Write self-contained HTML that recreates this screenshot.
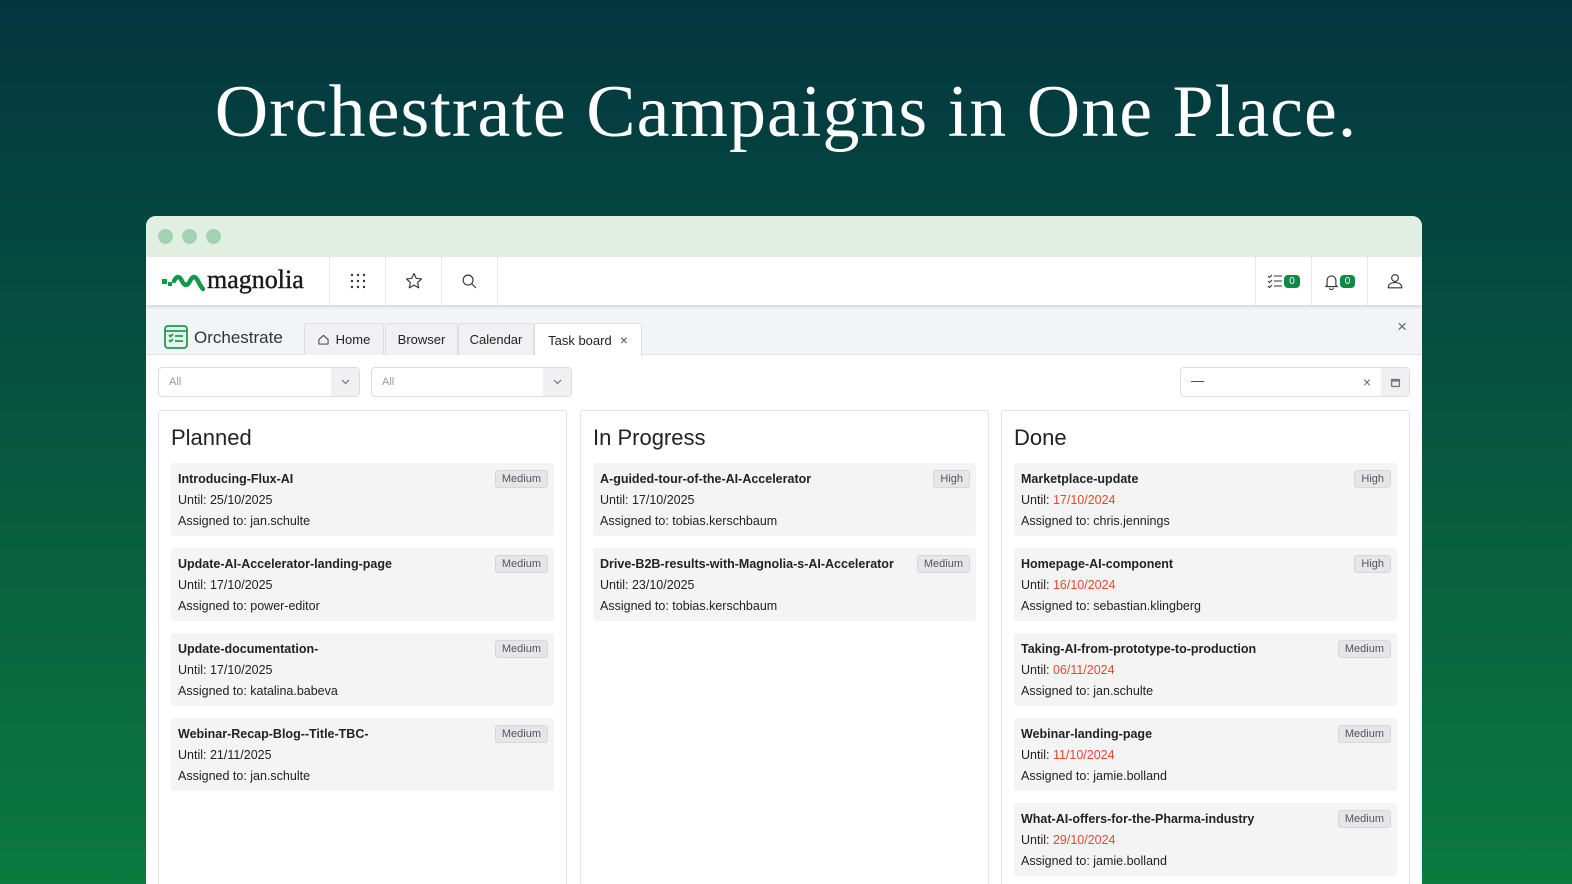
<!DOCTYPE html>
<html><head><meta charset="utf-8"><style>
*{box-sizing:border-box;margin:0;padding:0}
html,body{width:1572px;height:884px;overflow:hidden}
body{background:linear-gradient(180deg,#033540 0%,#06503f 40%,#0b7a3f 100%);font-family:"Liberation Sans",Arial,sans-serif;position:relative}
h1{position:absolute;top:70px;left:0;width:1572px;text-align:center;color:#fff;font-family:"Liberation Serif",serif;font-weight:400;font-size:74px;letter-spacing:1px}
.win{position:absolute;left:146px;top:216px;width:1276px;height:668px;background:#fff;border-radius:10px 10px 0 0;overflow:hidden}
.tb{height:41px;background:#e0efe2;position:relative}
.dot{position:absolute;top:13px;width:15px;height:15px;border-radius:50%;background:#a3d1b2}
.hdr{height:48px;background:#fff;position:relative;box-shadow:0 2px 3px rgba(0,0,0,.12);z-index:2}
.hb{position:absolute;top:0;height:48px;border-left:1px solid #e8e8e8;display:flex;align-items:center;justify-content:center}
.sub{height:50px;background:#f3f4f6;position:relative;border-bottom:1px solid #e2e2e2}
.tab{position:absolute;top:18px;height:32px;border:1px solid #ddd;border-bottom:none;border-radius:3px 3px 0 0;background:#f1f1f3;font-size:13px;color:#222;display:flex;align-items:center;justify-content:center}
.sel{position:absolute;top:151px;height:30px;border:1px solid #dcdcdc;border-radius:4px;background:#fff;font-size:11px;color:#999;padding:8px 10px}
.sel .ar{position:absolute;right:0;top:0;width:28px;height:28px;background:#f0f0f2;display:flex;align-items:center;justify-content:center}
.col{position:absolute;top:194px;width:409px;height:500px;border:1px solid #e3e3e3;border-radius:3px;background:#fff}
.col h2{font-weight:400;font-size:22px;color:#222;position:absolute;left:12px;top:14px}
.card{position:absolute;left:12px;width:383px;height:73px;background:#f4f4f4;border-radius:3px;padding:6px 7px;font-size:12.5px;color:#222;line-height:21px}
.card b{font-weight:700}
.bd{position:absolute;right:6px;top:7px;height:18px;background:#e6e6ea;border:1px solid #d6d6db;border-radius:3px;font-size:11px;color:#555;line-height:16px;padding:0 6px}
.r{color:#e8462f}
.g{background:#0f8a45;color:#fff;font-size:10px;border-radius:4px;padding:1px 5px;margin-left:1px}
</style></head><body>
<h1>Orchestrate Campaigns in One Place.</h1>
<div class="win">
<div class="tb"><div class="dot" style="left:12px"></div><div class="dot" style="left:36px"></div><div class="dot" style="left:60px"></div></div>
<div class="hdr">
<div style="position:absolute;left:15px;top:12px;display:flex;align-items:center">
<svg width="44" height="22" viewBox="0 0 44 22"><rect x="1" y="8" width="5" height="5" fill="#0f9a4a"/><rect x="7" y="11" width="4" height="4" fill="#0f9a4a"/><path d="M13 10 Q17 2 21 10 T29 10 T37 10 Q40 16 42 18" stroke="#0f9a4a" stroke-width="4.5" fill="none" stroke-linecap="round"/></svg>
<span style="font-family:'Liberation Serif',serif;font-size:26px;color:#1a1a1a;margin-left:2px;margin-top:-4px;-webkit-text-stroke:0.4px #1a1a1a">magnolia</span></div>
<div class="hb" style="left:183px;width:56px"><svg width="16" height="16"><g fill="#333"><circle cx="2" cy="2" r="1.2"/><circle cx="8" cy="2" r="1.2"/><circle cx="14" cy="2" r="1.2"/><circle cx="2" cy="8" r="1.2"/><circle cx="8" cy="8" r="1.2"/><circle cx="14" cy="8" r="1.2"/><circle cx="2" cy="14" r="1.2"/><circle cx="8" cy="14" r="1.2"/><circle cx="14" cy="14" r="1.2"/></g></svg></div>
<div class="hb" style="left:239px;width:56px"><svg width="18" height="18" viewBox="0 0 24 24"><path d="M12 2l3 6.5 7 .8-5.2 4.8 1.5 7L12 17.5 5.7 21.1l1.5-7L2 9.3l7-.8z" fill="none" stroke="#333" stroke-width="1.5" stroke-linejoin="round"/></svg></div>
<div class="hb" style="left:295px;width:57px;border-right:1px solid #e8e8e8"><svg width="17" height="17" viewBox="0 0 24 24"><circle cx="10" cy="10" r="7" fill="none" stroke="#333" stroke-width="1.6"/><path d="M15 15l6 6" stroke="#333" stroke-width="1.6"/></svg></div>
<div class="hb" style="left:1109px;width:56px"><svg width="16" height="14" viewBox="0 0 16 14"><path d="M1 2l1.5 1.5L5 1M1 7l1.5 1.5L5 6M1 12l1.5 1.5L5 11M7 2h8M7 7h8M7 12h8" stroke="#333" stroke-width="1.1" fill="none"/></svg><span class="g">0</span></div>
<div class="hb" style="left:1165px;width:56px"><svg width="15" height="17" viewBox="0 0 24 26"><path d="M5 19V11a7 7 0 0114 0v8l2 2H3z M9 23a3 3 0 006 0" fill="none" stroke="#333" stroke-width="1.8"/></svg><span class="g">0</span></div>
<div class="hb" style="left:1221px;width:55px"><svg width="18" height="18" viewBox="0 0 24 24"><circle cx="12" cy="8" r="4.5" fill="none" stroke="#333" stroke-width="1.5"/><path d="M3 21c0-5 4-7 9-7s9 2 9 7z" fill="none" stroke="#333" stroke-width="1.5"/></svg></div>
</div>
<div class="sub">
<svg style="position:absolute;left:18px;top:20px" width="24" height="24" viewBox="0 0 24 24"><rect x="1" y="1" width="22" height="22" rx="3" fill="#e6f5ec" stroke="#1e9a55" stroke-width="1.8"/><path d="M1 6h22" stroke="#1e9a55" stroke-width="1.8"/><path d="M5 10l1.5 1.5L9 9M5 15l1.5 1.5L9 14M11 11h8M11 16h8" stroke="#1e9a55" stroke-width="1.8" fill="none"/></svg>
<span style="position:absolute;left:48px;top:23px;font-size:17px;color:#333">Orchestrate</span>
<div class="tab" style="left:158px;width:80px"><svg width="11" height="11" viewBox="0 0 12 12" style="margin-right:7px"><path d="M1 6L6 1.5 11 6V11H1z" fill="none" stroke="#333"/></svg>Home</div>
<div class="tab" style="left:239px;width:73px">Browser</div>
<div class="tab" style="left:312px;width:76px">Calendar</div>
<div class="tab" style="left:388px;width:108px;background:#fff;height:33px">Task board<span style="margin-left:8px;color:#555;font-size:14px">×</span></div>
<span style="position:absolute;right:15px;top:12px;font-size:17px;color:#666">×</span>
</div>
<div class="sel" style="left:12px;width:202px">All<div class="ar"><svg width="9" height="6"><path d="M1 1l3.5 3.5L8 1" stroke="#666" fill="none"/></svg></div></div>
<div class="sel" style="left:225px;width:201px">All<div class="ar"><svg width="9" height="6"><path d="M1 1l3.5 3.5L8 1" stroke="#666" fill="none"/></svg></div></div>
<div class="sel" style="left:1034px;width:230px;color:#333;font-size:13px;padding-top:5px">—<span style="position:absolute;right:38px;top:6px;color:#666;font-size:14px">×</span><div class="ar"><svg width="11" height="11" viewBox="0 0 12 12"><rect x="1" y="2" width="10" height="9" rx="1" fill="#777"/><rect x="2.5" y="5" width="7" height="4.5" fill="#eee"/></svg></div></div>

<div class="col" style="left:12px"><h2>Planned</h2>
<div class="card" style="top:52px"><b>Introducing-Flux-AI</b><span class="bd">Medium</span><br>Until: 25/10/2025<br>Assigned to: jan.schulte</div>
<div class="card" style="top:137px"><b>Update-AI-Accelerator-landing-page</b><span class="bd">Medium</span><br>Until: 17/10/2025<br>Assigned to: power-editor</div>
<div class="card" style="top:222px"><b>Update-documentation-</b><span class="bd">Medium</span><br>Until: 17/10/2025<br>Assigned to: katalina.babeva</div>
<div class="card" style="top:307px"><b>Webinar-Recap-Blog--Title-TBC-</b><span class="bd">Medium</span><br>Until: 21/11/2025<br>Assigned to: jan.schulte</div>
</div>
<div class="col" style="left:434px"><h2>In Progress</h2>
<div class="card" style="top:52px"><b>A-guided-tour-of-the-AI-Accelerator</b><span class="bd">High</span><br>Until: 17/10/2025<br>Assigned to: tobias.kerschbaum</div>
<div class="card" style="top:137px"><b>Drive-B2B-results-with-Magnolia-s-AI-Accelerator</b><span class="bd">Medium</span><br>Until: 23/10/2025<br>Assigned to: tobias.kerschbaum</div>
</div>
<div class="col" style="left:855px"><h2>Done</h2>
<div class="card" style="top:52px"><b>Marketplace-update</b><span class="bd">High</span><br>Until: <span class="r">17/10/2024</span><br>Assigned to: chris.jennings</div>
<div class="card" style="top:137px"><b>Homepage-AI-component</b><span class="bd">High</span><br>Until: <span class="r">16/10/2024</span><br>Assigned to: sebastian.klingberg</div>
<div class="card" style="top:222px"><b>Taking-AI-from-prototype-to-production</b><span class="bd">Medium</span><br>Until: <span class="r">06/11/2024</span><br>Assigned to: jan.schulte</div>
<div class="card" style="top:307px"><b>Webinar-landing-page</b><span class="bd">Medium</span><br>Until: <span class="r">11/10/2024</span><br>Assigned to: jamie.bolland</div>
<div class="card" style="top:392px"><b>What-AI-offers-for-the-Pharma-industry</b><span class="bd">Medium</span><br>Until: <span class="r">29/10/2024</span><br>Assigned to: jamie.bolland</div>
</div>
</div>
</body></html>
